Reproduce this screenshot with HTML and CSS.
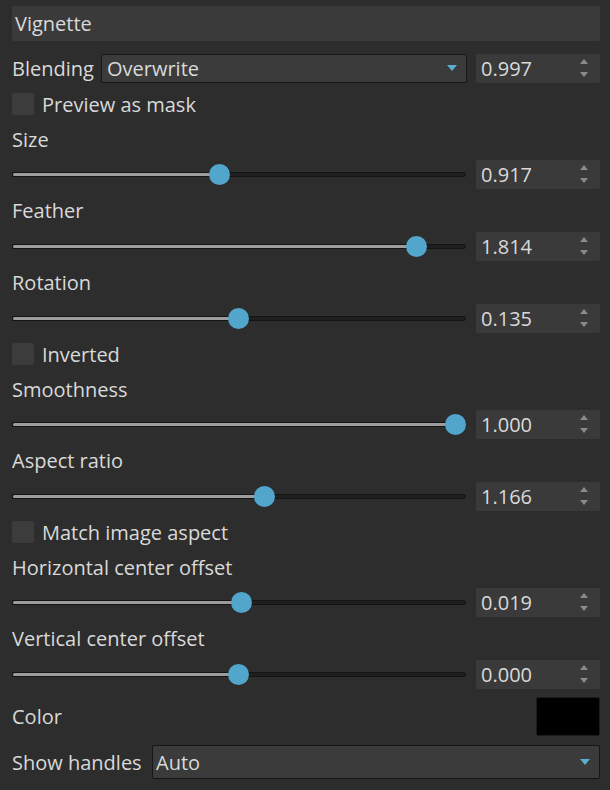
FILE: index.html
```html
<!DOCTYPE html>
<html>
<head>
<meta charset="utf-8">
<link rel="stylesheet" href="styles.css">
</head>
<body>
<div class="panel">
  <div class="title">Vignette</div>

  <div class="row blend-row">
    <span class="label">Blending</span>
    <div class="combo combo-blend"><span>Overwrite</span><span class="caret"></span></div>
    <div class="spin"><span>0.997</span><span class="arrows"><i class="up"></i><i class="down"></i></span></div>
  </div>

  <label class="row check"><span class="box"></span><span class="label">Preview as mask</span></label>

  <div class="row lab tight">Size</div>
  <div class="row slider-row">
    <div class="track" style="--p:0.457"><div class="fill"></div><div class="thumb"></div></div>
    <div class="spin"><span>0.917</span><span class="arrows"><i class="up"></i><i class="down"></i></span></div>
  </div>

  <div class="row lab">Feather</div>
  <div class="row slider-row">
    <div class="track" style="--p:0.909"><div class="fill"></div><div class="thumb"></div></div>
    <div class="spin"><span>1.814</span><span class="arrows"><i class="up"></i><i class="down"></i></span></div>
  </div>

  <div class="row lab">Rotation</div>
  <div class="row slider-row">
    <div class="track" style="--p:0.499"><div class="fill"></div><div class="thumb"></div></div>
    <div class="spin"><span>0.135</span><span class="arrows"><i class="up"></i><i class="down"></i></span></div>
  </div>

  <label class="row check"><span class="box"></span><span class="label">Inverted</span></label>

  <div class="row lab tight">Smoothness</div>
  <div class="row slider-row">
    <div class="track" style="--p:1"><div class="fill"></div><div class="thumb"></div></div>
    <div class="spin"><span>1.000</span><span class="arrows"><i class="up"></i><i class="down"></i></span></div>
  </div>

  <div class="row lab">Aspect ratio</div>
  <div class="row slider-row">
    <div class="track" style="--p:0.561"><div class="fill"></div><div class="thumb"></div></div>
    <div class="spin"><span>1.166</span><span class="arrows"><i class="up"></i><i class="down"></i></span></div>
  </div>

  <label class="row check"><span class="box"></span><span class="label">Match image aspect</span></label>

  <div class="row lab tight">Horizontal center offset</div>
  <div class="row slider-row">
    <div class="track" style="--p:0.508"><div class="fill"></div><div class="thumb"></div></div>
    <div class="spin"><span>0.019</span><span class="arrows"><i class="up"></i><i class="down"></i></span></div>
  </div>

  <div class="row lab">Vertical center offset</div>
  <div class="row slider-row">
    <div class="track" style="--p:0.499"><div class="fill"></div><div class="thumb"></div></div>
    <div class="spin"><span>0.000</span><span class="arrows"><i class="up"></i><i class="down"></i></span></div>
  </div>

  <div class="row color-row">
    <span class="label">Color</span>
    <div class="swatch"></div>
  </div>

  <div class="row handles-row">
    <span class="label">Show handles</span>
    <div class="combo combo-handles"><span>Auto</span><span class="caret"></span></div>
  </div>
</div>
</body>
</html>
```

FILE: styles.css
```css
html, body {
  margin: 0;
  padding: 0;
  background: #2d2d2d;
}
body {
  width: 610px;
  height: 790px;
  overflow: hidden;
  font-family: "Open Sans", "Noto Sans", sans-serif;
  font-size: 20px;
  color: #d9d9d9;
}
.panel {
  display: flex;
  flex-direction: column;
  padding: 6px 10px 0 12px;
}
.title {
  height: 35px;
  background: #3a3a3a;
  border-radius: 2px;
  padding-left: 3px;
  display: flex;
  align-items: center;
  box-sizing: border-box;
}
.row {
  display: flex;
  align-items: center;
  height: 36px;
}
.row.tight { height: 34px; }
.blend-row {
  margin-top: 9px;
}
.blend-row .label {
  width: 89px;
  flex: none;
}
.blend-row .combo-blend {
  flex: 1;
  margin-right: 9px;
}
.combo {
  height: 29px;
  box-sizing: border-box;
  border: 1px solid #161616;
  background: #3b3b3b;
  border-radius: 2px;
  display: flex;
  align-items: center;
  justify-content: space-between;
  padding: 0 9px 0 5px;
}
.caret {
  width: 0;
  height: 0;
  border-left: 5px solid transparent;
  border-right: 5px solid transparent;
  border-top: 6px solid #5aaed2;
}
.spin {
  width: 124px;
  height: 29px;
  margin-left: auto;
  flex: none;
  background: #3a3a3a;
  border-radius: 2px;
  display: flex;
  align-items: center;
  justify-content: space-between;
  padding: 0 12px 0 5px;
  box-sizing: border-box;
}
.arrows {
  display: flex;
  flex-direction: column;
  gap: 8px;
}
.arrows i {
  display: block;
  width: 0;
  height: 0;
  border-left: 4px solid transparent;
  border-right: 4px solid transparent;
}
.arrows .up { border-bottom: 5px solid #8a8a8a; }
.arrows .down { border-top: 5px solid #8a8a8a; }
.check {
  gap: 8px;
}
.box {
  width: 22px;
  height: 22px;
  background: #3c3c3c;
  border-radius: 2px;
  flex: none;
}
.slider-row {
  gap: 10px;
}
.track {
  position: relative;
  flex: 1;
  height: 5px;
  box-sizing: border-box;
  background: #1f1f1f;
  border: 1px solid #141414;
  border-radius: 0 3px 3px 0;
}
.fill {
  position: absolute;
  left: 0;
  top: 0;
  bottom: 0;
  width: calc(var(--p) * (100% - 18px) + 8px);
  background: #9c9c9c;
  border-radius: 2px 0 0 2px;
}
.thumb {
  position: absolute;
  top: 50%;
  left: calc(var(--p) * (100% - 18px) - 2px);
  width: 21px;
  height: 21px;
  margin-top: -10.5px;
  border-radius: 50%;
  background: #52a6cc;
}
.color-row {
  height: 49px;
  justify-content: space-between;
}
.swatch {
  width: 64px;
  height: 39px;
  background: #000;
  border: 1px solid #1c1c1c;
  border-radius: 2px;
  box-sizing: border-box;
}
.handles-row {
  margin-top: 4px;
  height: 34px;
}
.handles-row .label {
  width: 140px;
  flex: none;
}
.combo-handles {
  flex: 1;
  height: 34px;
  padding-left: 3px;
  padding-right: 9px;
}
```
